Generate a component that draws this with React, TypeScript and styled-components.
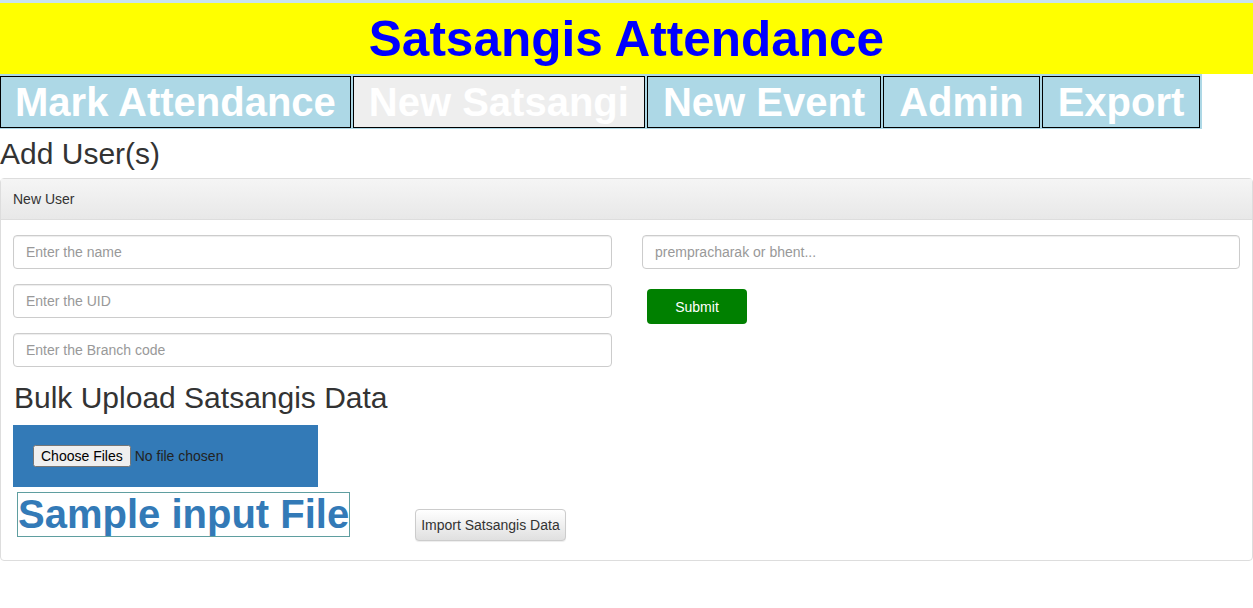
import React, { useState } from 'react';
import styled, { createGlobalStyle } from 'styled-components';

const GlobalStyle = createGlobalStyle`
  * { box-sizing: border-box; }
  body {
    margin: 0;
    background: #fff;
    font-family: "Liberation Sans", Arial, Helvetica, sans-serif;
    font-size: 14px;
    color: #333;
  }
`;

const Header = styled.header`
  border-top: 3px solid #c9e3ee;
  background-color: #ffff00;
  height: 74px;
  text-align: center;
`;

const Title = styled.h1`
  margin: 0;
  color: #0000ff;
  font-size: 49.5px;
  font-weight: bold;
  line-height: 71px;
`;

const Nav = styled.nav`
  display: inline-flex;
  gap: 2px;
  padding: 2px 2px 1px 0;
  background-color: #add8e6;
`;

const Tab = styled.a<{ $active?: boolean }>`
  display: block;
  padding: 0 15px;
  border: 1px solid #000;
  background-color: ${p => (p.$active ? '#eeeeee' : '#add8e6')};
  color: #fff;
  font-size: 40px;
  font-weight: bold;
  line-height: 50px;
  text-decoration: none;
  cursor: pointer;
  &:first-child {
    padding: 0 14px;
  }
`;

const PageHeading = styled.h2`
  margin: 8px 0;
  font-size: 30px;
  font-weight: normal;
  line-height: 33px;
  color: #333;
`;

const Panel = styled.section`
  border: 1px solid #ddd;
  border-radius: 4px;
`;

const PanelHeading = styled.div`
  padding: 10px 12px;
  line-height: 20px;
  background-image: linear-gradient(to bottom, #f5f5f5 0%, #e8e8e8 100%);
  border-bottom: 1px solid #ddd;
  font-size: 14px;
  color: #333;
`;

const PanelBody = styled.div`
  padding: 15px 12px 19px 12px;
`;

const FormGrid = styled.div`
  display: grid;
  grid-template-columns: 599px 598px;
  column-gap: 30px;
`;

const Column = styled.div`
  display: flex;
  flex-direction: column;
  align-items: flex-start;
  gap: 15px;
`;

const TextInput = styled.input`
  width: 100%;
  height: 34px;
  padding: 6px 12px;
  border: 1px solid #ccc;
  border-radius: 4px;
  box-shadow: inset 0 1px 1px rgba(0, 0, 0, 0.075);
  font-family: inherit;
  font-size: 14px;
  color: #555;
  &::placeholder {
    color: #999;
  }
  &:focus {
    outline: none;
    border-color: #66afe9;
  }
`;

const SubmitButton = styled.button`
  margin: 5px 0 0 5px;
  width: 100px;
  height: 35px;
  border: none;
  border-radius: 4px;
  background-color: #008000;
  color: #fff;
  font-family: inherit;
  font-size: 14px;
  cursor: pointer;
`;

const SectionHeading = styled.h2`
  margin: 14px 0 11px 1px;
  font-size: 30px;
  font-weight: normal;
  line-height: 33px;
  color: #333;
`;

const UploadBox = styled.div`
  width: 305px;
  height: 62px;
  padding: 0 20px;
  display: flex;
  align-items: center;
  background-color: #337ab7;
`;

const FileInput = styled.input`
  font-family: "Liberation Sans", Arial, sans-serif;
  font-size: 14px;
  color: #222;
`;

const ActionRow = styled.div`
  display: flex;
  align-items: flex-start;
  margin-top: 5px;
  padding-left: 4px;
`;

const SampleLink = styled.a`
  display: block;
  border: 1px solid #5f9ea0;
  color: #337ab7;
  font-size: 40px;
  font-weight: bold;
  line-height: 43px;
  text-decoration: none;
`;

const ImportButton = styled.button`
  margin: 17px 0 0 65px;
  height: 32px;
  padding: 0 5px;
  border: 1px solid #ccc;
  border-radius: 4px;
  background-image: linear-gradient(to bottom, #fff 0%, #e0e0e0 100%);
  box-shadow: inset 0 1px 0 rgba(255, 255, 255, 0.15), 0 1px 1px rgba(0, 0, 0, 0.075);
  font-family: inherit;
  font-size: 14px;
  color: #333;
  cursor: pointer;
`;

const tabs = ['Mark Attendance', 'New Satsangi', 'New Event', 'Admin', 'Export'];

const App: React.FC = () => {
  const [active, setActive] = useState('New Satsangi');
  const [form, setForm] = useState({ name: '', uid: '', branch: '', type: '' });

  const handleChange = (e: React.ChangeEvent<HTMLInputElement>) => {
    const { name, value } = e.target;
    setForm(prev => ({ ...prev, [name]: value }));
  };

  return (
    <>
      <GlobalStyle />
      <Header>
        <Title>Satsangis Attendance</Title>
      </Header>
      <Nav>
        {tabs.map(t => (
          <Tab key={t} $active={t === active} onClick={() => setActive(t)}>
            {t}
          </Tab>
        ))}
      </Nav>
      <PageHeading>Add User(s)</PageHeading>
      <Panel>
        <PanelHeading>New User</PanelHeading>
        <PanelBody>
          <FormGrid>
            <Column>
              <TextInput name="name" placeholder="Enter the name" value={form.name} onChange={handleChange} />
              <TextInput name="uid" placeholder="Enter the UID" value={form.uid} onChange={handleChange} />
              <TextInput name="branch" placeholder="Enter the Branch code" value={form.branch} onChange={handleChange} />
            </Column>
            <Column>
              <TextInput name="type" placeholder="prempracharak or bhent..." value={form.type} onChange={handleChange} />
              <SubmitButton type="button">Submit</SubmitButton>
            </Column>
          </FormGrid>
          <SectionHeading>Bulk Upload Satsangis Data</SectionHeading>
          <UploadBox>
            <FileInput type="file" multiple />
          </UploadBox>
          <ActionRow>
            <SampleLink href="#">Sample input File</SampleLink>
            <ImportButton type="button">Import Satsangis Data</ImportButton>
          </ActionRow>
        </PanelBody>
      </Panel>
    </>
  );
};

export default App;
